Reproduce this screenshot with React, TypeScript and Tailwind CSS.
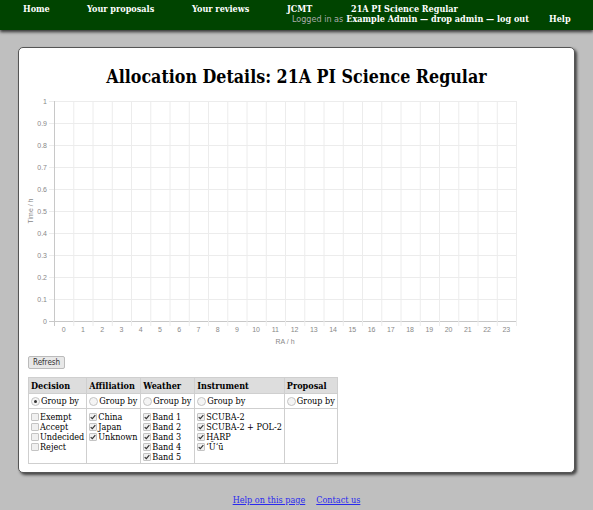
import React from "react";

const serif = { fontFamily: '"DejaVu Serif Condensed", "DejaVu Serif", serif', fontStretch: "condensed" };
const sans = { fontFamily: '"DejaVu Sans Condensed", "DejaVu Sans", sans-serif', fontStretch: "condensed" };

const hours = Array.from({ length: 24 }, (_, i) => i);
const yTicks = [1, 0.9, 0.8, 0.7, 0.6, 0.5, 0.4, 0.3, 0.2, 0.1, 0];

function Chart() {
  const x0 = 54;
  const step = 19.25;
  const yOf = (v: number) => 321 - v * 220;
  return (
    <svg className="block mt-[6px]" width={556} height={255} viewBox="19 95 556 255">
      {yTicks.map((v) => (
        <g key={v}>
          <line x1={49} x2={516} y1={yOf(v) + 0.5} y2={yOf(v) + 0.5} stroke={v === 0 ? "#c8c8c8" : "#ececec"} />
          <text x={47} y={yOf(v) + 2.5} textAnchor="end" fontSize={7} fill="#888" fontFamily="Liberation Sans, sans-serif">
            {String(v)}
          </text>
        </g>
      ))}
      {Array.from({ length: 25 }, (_, i) => (
        <line key={i} x1={x0 + i * step + 0.5} x2={x0 + i * step + 0.5} y1={101} y2={326} stroke={i === 0 ? "#c8c8c8" : "#ececec"} />
      ))}
      {hours.map((h) => (
        <text key={h} x={x0 + step * (h + 0.5)} y={332} textAnchor="middle" fontSize={7} fill="#888" fontFamily="Liberation Sans, sans-serif">
          {h}
        </text>
      ))}
      <text x={285} y={344} textAnchor="middle" fontSize={7} fill="#888" fontFamily="Liberation Sans, sans-serif">
        RA / h
      </text>
      <text x={0} y={0} transform="translate(33 211) rotate(-90)" textAnchor="middle" fontSize={7} fill="#888" fontFamily="Liberation Sans, sans-serif">
        Time / h
      </text>
    </svg>
  );
}

function Box({ checked }: { checked: boolean }) {
  return (
    <span className="inline-flex items-center justify-center w-[8px] h-[8px] mr-[1px] border border-[#c4c4c4] bg-[#f0f0f0] rounded-[1px] shrink-0">
      {checked && (
        <svg width="7" height="6" viewBox="0 0 7 6">
          <path d="M0.8 3.2 L2.7 5 L6.2 0.8" fill="none" stroke="#333" strokeWidth="1.3" />
        </svg>
      )}
    </span>
  );
}

function Check({ label, checked = true }: { label: string; checked?: boolean }) {
  return (
    <div className="flex items-center h-[10px] whitespace-nowrap">
      <Box checked={checked} />
      {label}
    </div>
  );
}

function GroupBy({ checked = false }: { checked?: boolean }) {
  return (
    <div className="flex items-center whitespace-nowrap">
      <span className="inline-flex items-center justify-center w-[9px] h-[9px] mr-[1px] rounded-full border border-[#c4c4c4] bg-[#f4f4f4] shrink-0">
        {checked && <span className="w-[3px] h-[3px] rounded-full bg-[#333]" />}
      </span>
      Group by
    </div>
  );
}

const cell = "border border-[#cfcfcf] px-[2px]";

export default function App() {
  return (
    <div className="min-h-[510px] bg-[#bfbfbf] text-black" style={serif}>
      <header className="h-[30px] bg-[#004400] shadow-[0_2px_3px_#333] text-white font-bold text-[9px] leading-[11px] relative">
        <div className="absolute left-[23px] top-[4px] flex">
          <span className="w-[64px]">Home</span>
          <span className="w-[105px]">Your proposals</span>
          <span className="w-[95px]">Your reviews</span>
          <span className="w-[64px]">JCMT</span>
          <span>21A PI Science Regular</span>
        </div>
        <div className="absolute right-[64px] top-[14px] flex">
          <span className="font-normal text-[#aaa] mr-[3px]" style={sans}>Logged in as</span>
          <span>Example Admin — drop admin — log out</span>
        </div>
        <span className="absolute left-[549px] top-[14px]">Help</span>
      </header>

      <main className="mx-[18px] mt-[17px] bg-white border border-[#555] rounded-[5px] shadow-[2px_2px_3px_#444] pb-[8px]">
        <h1 className="text-center font-bold text-[17.7px] leading-[24px] pt-[17px]">
          Allocation Details: 21A PI Science Regular
        </h1>
        <Chart />
        <div className="px-[9px] mt-[6px]">
          <button className="block h-[13px] px-[4px] text-[8px] leading-[11px] text-[#333] bg-[#e8e8e8] border border-[#bbb] rounded-[2px]" style={sans}>
            Refresh
          </button>
          <table className="mt-[8px] border-collapse text-[9px] leading-[10px]">
            <thead>
              <tr className="bg-[#dddddd]">
                <th className={`${cell} text-left font-bold h-[16px] w-[57px]`}>Decision</th>
                <th className={`${cell} text-left font-bold w-[54px]`}>Affiliation</th>
                <th className={`${cell} text-left font-bold w-[54px]`}>Weather</th>
                <th className={`${cell} text-left font-bold w-[89px]`}>Instrument</th>
                <th className={`${cell} text-left font-bold w-[53px]`}>Proposal</th>
              </tr>
            </thead>
            <tbody>
              <tr>
                <td className={`${cell} h-[15px]`}><GroupBy checked /></td>
                <td className={cell}><GroupBy /></td>
                <td className={cell}><GroupBy /></td>
                <td className={cell}><GroupBy /></td>
                <td className={cell}><GroupBy /></td>
              </tr>
              <tr className="align-top">
                <td className={`${cell} pt-[3px] pb-[1px]`}>
                  <Check label="Exempt" checked={false} />
                  <Check label="Accept" checked={false} />
                  <Check label="Undecided" checked={false} />
                  <Check label="Reject" checked={false} />
                </td>
                <td className={`${cell} pt-[3px]`}>
                  <Check label="China" />
                  <Check label="Japan" />
                  <Check label="Unknown" />
                </td>
                <td className={`${cell} pt-[3px] pb-[1px]`}>
                  <Check label="Band 1" />
                  <Check label="Band 2" />
                  <Check label="Band 3" />
                  <Check label="Band 4" />
                  <Check label="Band 5" />
                </td>
                <td className={`${cell} pt-[3px]`}>
                  <Check label="SCUBA-2" />
                  <Check label="SCUBA-2 + POL-2" />
                  <Check label="HARP" />
                  <Check label="ʻŪʻū" />
                </td>
                <td className={cell}></td>
              </tr>
            </tbody>
          </table>
        </div>
      </main>

      <footer className="flex justify-center gap-[11px] pt-[21px] text-[9px]">
        <a href="#" className="text-[#2a2aee] underline">Help on this page</a>
        <a href="#" className="text-[#2a2aee] underline">Contact us</a>
      </footer>
    </div>
  );
}
